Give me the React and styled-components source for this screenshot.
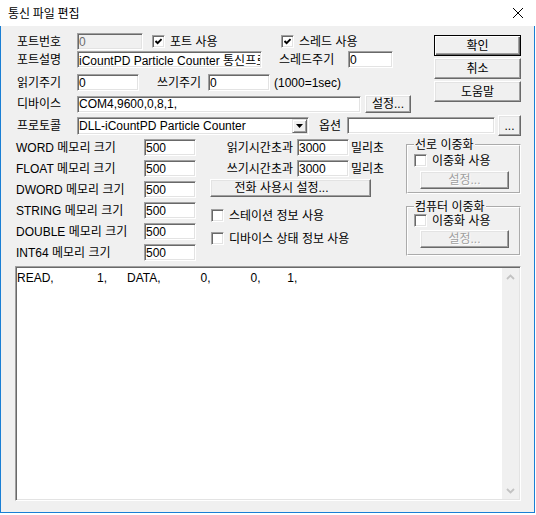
import React from "react";
import styled, { createGlobalStyle, css } from "styled-components";

// 통신 파일 편집 대화상자

const Global = createGlobalStyle`
  html, body {
    margin: 0;
    padding: 0;
    background: #ffffff;
  }
  body {
    font-family: "Liberation Sans", "Noto Sans CJK KR", sans-serif;
    font-size: 12px;
    color: #000;
  }
  *, *::before, *::after {
    box-sizing: border-box;
  }
`;

const sunken = css`
  background: #ffffff;
  border: 1px solid;
  border-color: #a0a0a0 #ffffff #ffffff #a0a0a0;
  box-shadow: inset 1px 1px #696969, inset -1px -1px #e3e3e3;
`;

const Window = styled.div`
  width: 535px;
  height: 513px;
  display: flex;
  flex-direction: column;
`;

const TitleBar = styled.div`
  height: 26px;
  flex: none;
  display: flex;
  align-items: center;
  padding-left: 8px;
  background: #ffffff;
`;

const Title = styled.span`
  font-family: "Noto Sans CJK KR", sans-serif;
  font-size: 12px;
  line-height: 14px;
`;

const CloseBox = styled.div`
  margin-left: auto;
  width: 34px;
  height: 26px;
  display: flex;
  align-items: center;
  justify-content: center;
`;

const Body = styled.div`
  flex: 1;
  display: flex;
  flex-direction: column;
  background: #f0f0f0;
  border: 1px solid #1a7fd4;
  border-top: 0;
  padding: 7px 13px 11px 14px;
`;

const Top = styled.div`
  display: flex;
  align-items: flex-start;
  flex: none;
`;

const LeftCol = styled.div`
  width: 397px;
  display: flex;
  flex-direction: column;
`;

const ButtonCol = styled.div`
  margin-left: auto;
  margin-top: 2px;
  width: 87px;
  display: flex;
  flex-direction: column;
  gap: 2px;
`;

const Row = styled.div`
  display: flex;
  align-items: center;
  flex: none;
  height: ${(p) => p.$h || 17}px;
  margin-top: ${(p) => p.$mt || 0}px;
`;

const Label = styled.span`
  flex: none;
  white-space: nowrap;
  width: ${(p) => (p.$w ? `${p.$w}px` : "auto")};
  margin-left: ${(p) => p.$ml || 0}px;
  padding-left: ${(p) => p.$pl ?? 2}px;
  padding-right: ${(p) => p.$pr || 0}px;
  text-align: ${(p) => (p.$right ? "right" : "left")};
  line-height: 14px;
`;

const Field = styled.input`
  ${sunken};
  flex: none;
  width: ${(p) => p.$w}px;
  height: 17px;
  margin: 0;
  padding: 0 1px;
  font: inherit;
  color: #000;
  outline: none;

  &:disabled {
    background: #f0f0f0;
    color: #6d6d6d;
  }
`;

const Button = styled.button`
  flex: none;
  width: ${(p) => (p.$w ? `${p.$w}px` : "100%")};
  height: ${(p) => p.$h || 21}px;
  margin: ${(p) => p.$mt || 0}px 0 0 ${(p) => p.$ml || 0}px;
  padding: 0 ${(p) => p.$pr || 0}px 0 0;
  font: inherit;
  line-height: 14px;
  color: #000;
  background: #f0f0f0;
  border: 1px solid;
  border-color: #ffffff #696969 #696969 #ffffff;
  box-shadow: inset -1px -1px #a0a0a0, inset 1px 1px #e3e3e3;
  white-space: nowrap;

  ${(p) =>
    p.$default &&
    css`
      border-color: #000;
      box-shadow: inset 1px 1px #ffffff, inset -1px -1px #696969,
        inset -2px -2px #a0a0a0;
    `}

  &:disabled {
    color: #a0a0a0;
    text-shadow: 1px 1px #ffffff;
  }
`;

const CheckRow = styled.label`
  display: flex;
  align-items: center;
  gap: 5px;
  flex: none;
  height: 13px;
  white-space: nowrap;
  width: ${(p) => (p.$w ? `${p.$w}px` : "auto")};
  margin: ${(p) => p.$mt || 0}px 0 0 ${(p) => p.$ml || 0}px;
  line-height: 14px;
`;

const Box = styled.span`
  ${sunken};
  width: 13px;
  height: 13px;
  flex: none;
  display: flex;
  align-items: center;
  justify-content: center;
`;

const Combo = styled.div`
  ${sunken};
  flex: none;
  width: ${(p) => p.$w}px;
  height: 18px;
  padding: 1px;
  display: flex;
  align-items: stretch;
`;

const ComboText = styled.span`
  flex: 1;
  display: flex;
  align-items: center;
  overflow: hidden;
  white-space: nowrap;
`;

const DropButton = styled.span`
  width: 15px;
  flex: none;
  display: flex;
  align-items: center;
  justify-content: center;
  background: #f0f0f0;
  border: 1px solid;
  border-color: #e3e3e3 #696969 #696969 #e3e3e3;
  box-shadow: inset 1px 1px #ffffff, inset -1px -1px #a0a0a0;
`;

const Middle = styled.div`
  display: flex;
  align-items: flex-start;
  flex: none;
  margin-top: 3px;
`;

const MemCol = styled.div`
  width: 182px;
  display: flex;
  flex-direction: column;
  gap: 4px;
`;

const TimeCol = styled.div`
  width: 161px;
  margin-left: 13px;
  display: flex;
  flex-direction: column;
`;

const GroupCol = styled.div`
  width: 115px;
  margin-left: auto;
  display: flex;
  flex-direction: column;
  gap: 7px;
`;

const Group = styled.fieldset`
  margin: 0;
  min-width: 0;
  height: 55px;
  padding: 0 6px 0 6px;
  border: 2px groove #ffffff;
  display: flex;
  flex-direction: column;
`;

const Legend = styled.legend`
  padding: 0 1px;
  line-height: 12px;
  font-size: 12px;
`;

const Editor = styled.div`
  ${sunken};
  flex: 1;
  margin-top: 5px;
  padding: 1px;
  display: flex;
`;

const EditorText = styled.div`
  flex: 1;
  padding-top: 3px;
  white-space: pre;
  line-height: 14px;
  overflow: hidden;
`;

const ScrollBar = styled.div`
  width: 17px;
  flex: none;
  background: #f0f0f0;
  display: flex;
  flex-direction: column;
  justify-content: space-between;
`;

const ScrollArrow = styled.div`
  height: 17px;
  display: flex;
  align-items: center;
  justify-content: center;
`;

const Tick = () => (
  <svg width="7" height="7" viewBox="0 0 7 7">
    <path d="M0.5 3 L2.6 5.1 L6.6 1.1" fill="none" stroke="#000" strokeWidth="2" />
  </svg>
);

const Check = ({ checked, children, ...rest }) => (
  <CheckRow {...rest}>
    <Box>{checked && <Tick />}</Box>
    {children}
  </CheckRow>
);

const Chevron = ({ up }) => (
  <svg width="9" height="6" viewBox="0 0 9 6">
    <path
      d={up ? "M1 5 L4.5 1.5 L8 5" : "M1 1 L4.5 4.5 L8 1"}
      fill="none"
      stroke="#c2c2c2"
      strokeWidth="1.8"
    />
  </svg>
);

const memoryTypes = ["WORD", "FLOAT", "DWORD", "STRING", "DOUBLE", "INT64"];

const pad = (n) => " ".repeat(n);
const sample = `READ,${pad(13)}1,${pad(6)}DATA,${pad(12)}0,${pad(12)}0,${pad(8)}1,`;

const App = () => {
  return (
    <>
      <Global />
      <Window>
        <TitleBar>
          <Title>통신 파일 편집</Title>
          <CloseBox>
            <svg width="10" height="10" viewBox="0 0 10 10">
              <path d="M0 0 L10 10 M10 0 L0 10" stroke="#000" strokeWidth="1" />
            </svg>
          </CloseBox>
        </TitleBar>

        <Body>
          <Top>
            <LeftCol>
              <Row>
                <Label $w={62}>포트번호</Label>
                <Field $w={66} disabled defaultValue="0" />
                <Check checked $ml={9} $w={129}>
                  포트 사용
                </Check>
                <Check checked>스레드 사용</Check>
              </Row>
              <Row $mt={1}>
                <Label $w={62}>포트설명</Label>
                <Field $w={185} defaultValue="iCountPD Particle Counter 통신프로토콜" />
                <Label $w={69} $ml={17} $pl={0}>
                  스레드주기
                </Label>
                <Field $w={45} defaultValue="0" />
              </Row>
              <Row $mt={6}>
                <Label $w={62}>읽기주기</Label>
                <Field $w={62} defaultValue="0" />
                <Label $w={51} $ml={18} $pl={0}>
                  쓰기주기
                </Label>
                <Field $w={62} defaultValue="0" />
                <Label $ml={4} $pl={0}>
                  (1000=1sec)
                </Label>
              </Row>
              <Row $mt={4} $h={18}>
                <Label $w={62}>디바이스</Label>
                <Field $w={284} defaultValue="COM4,9600,0,8,1," />
                <Button $w={46} $h={18} $ml={4}>
                  설정...
                </Button>
              </Row>
            </LeftCol>

            <ButtonCol>
              <Button $default>확인</Button>
              <Button>취소</Button>
              <Button>도움말</Button>
            </ButtonCol>
          </Top>

          <Row $mt={2} $h={21}>
            <Label $w={62}>프로토콜</Label>
            <Combo $w={232}>
              <ComboText>DLL-iCountPD Particle Counter</ComboText>
              <DropButton>
                <svg width="7" height="4" viewBox="0 0 7 4">
                  <path d="M0 0 L7 0 L3.5 4 Z" fill="#000" />
                </svg>
              </DropButton>
            </Combo>
            <Label $w={28} $ml={10} $pl={0}>
              옵션
            </Label>
            <Field $w={148} defaultValue="" />
            <Button $w={23} $ml={3}>
              ...
            </Button>
          </Row>

          <Middle>
            <MemCol>
              {memoryTypes.map((type) => (
                <Row key={type}>
                  <Label $w={129} $pl={1}>
                    {type} 메모리 크기
                  </Label>
                  <Field $w={52} defaultValue="500" />
                </Row>
              ))}
            </MemCol>

            <TimeCol>
              <Row>
                <Label $w={87} $pl={0} $pr={4} $right>
                  읽기시간초과
                </Label>
                <Field $w={52} defaultValue="3000" />
                <Label $ml={2} $pl={0}>
                  밀리초
                </Label>
              </Row>
              <Row $mt={4}>
                <Label $w={87} $pl={0} $pr={4} $right>
                  쓰기시간초과
                </Label>
                <Field $w={52} defaultValue="3000" />
                <Label $ml={2} $pl={0}>
                  밀리초
                </Label>
              </Row>
              <Button $h={18} $mt={2} $pr={18}>
                전화 사용시 설정...
              </Button>
              <Check $mt={12} $ml={1}>
                스테이션 정보 사용
              </Check>
              <Check $mt={10} $ml={1}>
                디바이스 상태 정보 사용
              </Check>
            </TimeCol>

            <GroupCol>
              <Group>
                <Legend>선로 이중화</Legend>
                <Check $mt={3}>이중화 사용</Check>
                <Button $w={89} $h={18} $mt={4} $ml={6} disabled>
                  설정...
                </Button>
              </Group>
              <Group>
                <Legend>컴퓨터 이중화</Legend>
                <Check $mt={1}>이중화 사용</Check>
                <Button $w={89} $h={18} $mt={3} $ml={6} disabled>
                  설정...
                </Button>
              </Group>
            </GroupCol>
          </Middle>

          <Editor>
            <EditorText>{sample}</EditorText>
            <ScrollBar>
              <ScrollArrow>
                <Chevron up />
              </ScrollArrow>
              <ScrollArrow>
                <Chevron />
              </ScrollArrow>
            </ScrollBar>
          </Editor>
        </Body>
      </Window>
    </>
  );
};

export default App;
